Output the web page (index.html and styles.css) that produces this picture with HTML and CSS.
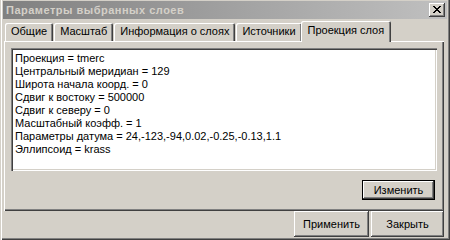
FILE: index.html
```html
<!DOCTYPE html>
<html lang="ru">
  <head>
    <meta charset="UTF-8" />
    <meta name="viewport" content="width=device-width, initial-scale=1.0" />
    <title>Параметры выбранных слоев</title>
    <link rel="stylesheet" href="styles.css">
  </head>
  <body>
    <div class="window">
      <div class="titlebar">
        <span class="title">Параметры выбранных слоев</span>
        <button class="close-btn" type="button">
          <svg width="8" height="7" viewBox="0 0 8 7">
            <path d="M0 0h2v1h-2zM6 0h2v1h-2zM1 1h2v1h-2zM5 1h2v1h-2zM2 2h4v1h-4zM3 3h2v1h-2zM2 4h4v1h-4zM1 5h2v1h-2zM5 5h2v1h-2zM0 6h2v1h-2zM6 6h2v1h-2z" fill="#000"/>
          </svg>
        </button>
      </div>

      <div class="dialog">
        <div class="tabs">
          <div class="tab">Общие</div>
          <div class="tab">Масштаб</div>
          <div class="tab">Информация о слоях</div>
          <div class="tab">Источники</div>
          <div class="tab active">Проекция слоя</div>
        </div>

        <div class="panel">
          <div class="textbox">
            <div>Проекция = tmerc</div>
            <div>Центральный меридиан = 129</div>
            <div>Широта начала коорд. = 0</div>
            <div>Сдвиг к востоку = 500000</div>
            <div>Сдвиг к северу = 0</div>
            <div>Масштабный коэфф. = 1</div>
            <div>Параметры датума = 24,-123,-94,0.02,-0.25,-0.13,1.1</div>
            <div>Эллипсоид = krass</div>
          </div>
          <div class="panel-actions">
            <button class="btn btn-default" type="button">Изменить</button>
          </div>
        </div>

        <div class="footer">
          <button class="btn btn-apply" type="button">Применить</button>
          <button class="btn btn-close" type="button">Закрыть</button>
        </div>
      </div>
    </div>
  </body>
</html>
```

FILE: styles.css
```css
* {
  margin: 0;
  padding: 0;
  box-sizing: border-box;
}

body {
  font-family: "Liberation Sans", Arial, sans-serif;
  font-size: 11px;
  color: #000;
  background: #d4d0c8;
}

.window {
  width: 450px;
  height: 240px;
  padding: 1px 3px 3px 3px;
  background: #d4d0c8;
  box-shadow: inset 1px 0 #d4d0c8, inset 2px 0 #fff,
    inset -1px -1px #404040, inset -2px -2px #808080;
  display: flex;
  flex-direction: column;
}

.titlebar {
  height: 18px;
  display: flex;
  align-items: center;
  justify-content: space-between;
  padding: 0 2px 0 3px;
  background: linear-gradient(to right, #808080, #c0c0c0);
}

.title {
  color: #d4d0c8;
  font-weight: bold;
  font-size: 11px;
  letter-spacing: 0.5px;
}

.close-btn {
  width: 16px;
  height: 14px;
  border: none;
  background: #d4d0c8;
  box-shadow: inset -1px -1px #404040, inset 1px 1px #fff,
    inset -2px -2px #808080;
  display: flex;
  align-items: center;
  justify-content: center;
  padding: 0 0 1px 0;
}

.close-btn svg {
  display: block;
}

.dialog {
  flex: 1;
  display: flex;
  flex-direction: column;
  padding: 1px 1px 0 1px;
}

.tabs {
  display: flex;
  align-items: flex-end;
  height: 21px;
  padding-left: 1px;
}

.tab {
  height: 18px;
  padding: 2px 6px 0 6px;
  margin-right: 1px;
  background: #d4d0c8;
  border-radius: 2px 2px 0 0;
  box-shadow: inset 1px 1px #fff, inset -1px 0 #404040, inset -2px 0 #808080;
  white-space: nowrap;
}

.tab.active {
  height: 21px;
  margin: 0 -1px -1px -2px;
  padding: 3px 7px 0 7px;
  position: relative;
  z-index: 1;
}

.panel {
  height: 170px;
  margin-right: 2px;
  padding: 7px 7px 0 7px;
  background: #d4d0c8;
  box-shadow: inset 1px 1px #fff, inset -1px -1px #404040,
    inset -2px -2px #808080;
  display: flex;
  flex-direction: column;
}

.textbox {
  height: 123px;
  padding: 4px 4px;
  background: #fff;
  line-height: 13px;
  box-shadow: inset 1px 1px #808080, inset 2px 2px #404040,
    inset -1px -1px #fff, inset -2px -2px #d4d0c8;
}

.panel-actions {
  display: flex;
  justify-content: flex-end;
  padding: 9px 2px 0 0;
}

.btn {
  font-family: "Liberation Sans", Arial, sans-serif;
  font-size: 11px;
  color: #000;
  background: #d4d0c8;
  border: none;
  box-shadow: inset -1px -1px #404040, inset 1px 1px #fff,
    inset -2px -2px #808080;
}

.btn-default {
  width: 73px;
  height: 20px;
  box-shadow: inset 0 0 0 1px #000, inset -2px -2px #404040,
    inset 2px 2px #fff, inset -3px -3px #808080;
}

.footer {
  display: flex;
  justify-content: flex-end;
  gap: 2px;
  padding-right: 2px;
}

.btn-apply {
  width: 75px;
  height: 26px;
}

.btn-close {
  width: 73px;
  height: 26px;
}
```
